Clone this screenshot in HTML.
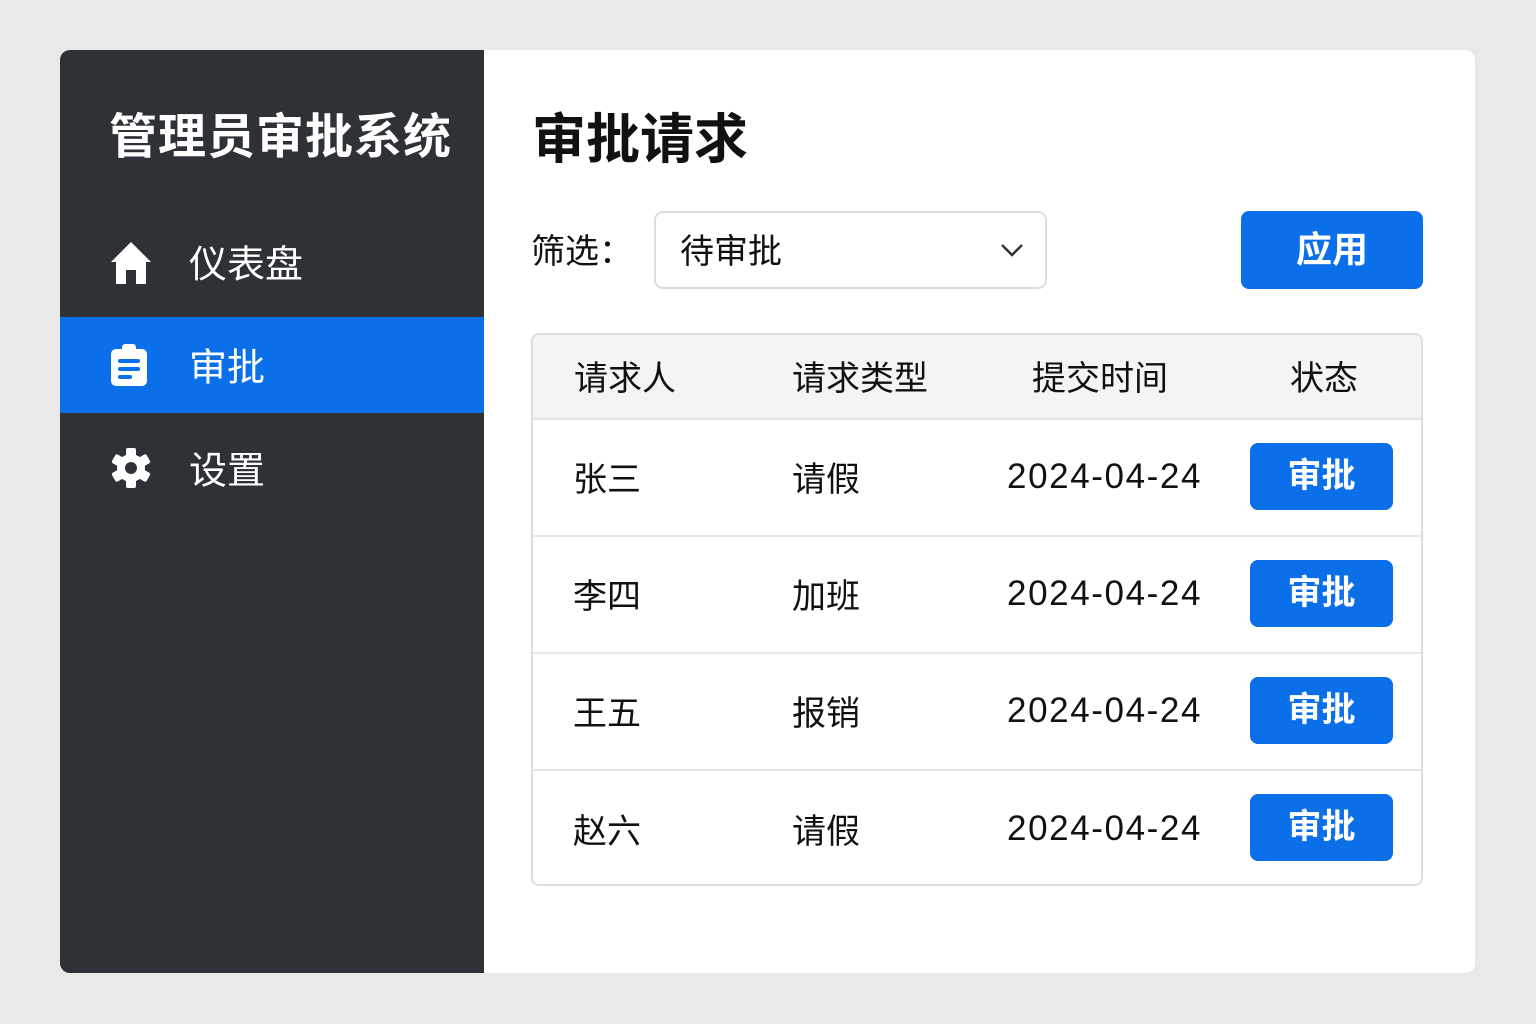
<!DOCTYPE html>
<html><head><meta charset="utf-8"><style>
*{margin:0;padding:0;box-sizing:border-box}
body{width:1536px;height:1024px;background:#e9e9e9;font-family:"Liberation Sans","Noto Sans CJK SC",sans-serif;position:relative;overflow:hidden;color:#111}
.card{position:absolute;left:60px;top:50px;width:1415px;height:923px;background:#fff;border-radius:10px;overflow:hidden}
.side{position:absolute;left:0;top:0;width:424px;height:923px;background:#2e3236}
.abs{position:absolute;white-space:nowrap}
.st{left:49px;top:47px;font-size:48px;font-weight:bold;color:#fff;letter-spacing:1px}
.nav{left:0;width:424px;height:96px;color:#fff;font-size:38px}
.nav span{position:absolute;left:129px;top:50%;transform:translateY(-52%)}
.nav svg{position:absolute;left:50px;top:50%;transform:translateY(-50%)}
.act{background:#0a6fe8}
.h1{left:472px;top:45px;font-size:54px;font-weight:bold}
.btn{background:#0a6fe8;color:#fff;border-radius:8px;text-align:center}
.sel{left:594px;top:161px;width:393px;height:78px;border:2px solid #ddd;border-radius:9px;font-size:34px}
.tbl{left:471px;top:283px;width:892px;height:553px;border:2px solid #ddd;border-radius:8px;overflow:hidden}
.hd{position:absolute;left:0;top:0;width:100%;height:85px;background:#f4f4f4;border-bottom:2px solid #e2e2e2}
.row{position:absolute;left:0;width:100%;height:117px;border-bottom:2px solid #e6e6e6;font-size:34px}
.c{position:absolute;top:50%;transform:translateY(-53%)}
.d{letter-spacing:1.6px;font-size:35px}
.rb{position:absolute;left:717px;top:23px;width:143px;height:67px;line-height:67px;font-size:34px;font-weight:bold}
</style></head><body>
<div class="card">
<div class="side">
<div class="abs st">管理员审批系统</div>
<div class="abs nav" style="top:164px"><svg width="42" height="44" viewBox="0 0 42 44"><path d="M21 2 L1 22 H6 V44 H16 V30 H26 V44 H36 V22 H41 Z" fill="#fff"/></svg><span>仪表盘</span></div>
<div class="abs nav act" style="top:267px"><svg width="38" height="42" viewBox="0 0 38 42"><rect x="1" y="5" width="36" height="37" rx="5" fill="#fff"/><rect x="12" y="0" width="14" height="9" rx="3" fill="#fff"/><rect x="8" y="15" width="22" height="4" rx="2" fill="#0a6fe8"/><rect x="8" y="23" width="22" height="4" rx="2" fill="#0a6fe8"/><rect x="8" y="31" width="14" height="4" rx="2" fill="#0a6fe8"/></svg><span>审批</span></div>
<div class="abs nav" style="top:370px"><svg width="42" height="42" viewBox="0 0 42 42"><g fill="#fff"><circle cx="21" cy="21" r="14"/><g id="t"><rect x="16" y="1" width="10" height="10" rx="2"/><rect x="16" y="31" width="10" height="10" rx="2"/></g><use href="#t" transform="rotate(60 21 21)"/><use href="#t" transform="rotate(120 21 21)"/></g><circle cx="21" cy="21" r="6" fill="#2e3236"/></svg><span>设置</span></div>
</div>
<div class="abs h1">审批请求</div>
<div class="abs" style="left:471px;top:174px;font-size:34px">筛选：</div>
<div class="abs sel"><span class="c" style="left:24px">待审批</span><svg class="abs" style="left:344px;top:30px" width="24" height="14" viewBox="0 0 24 14"><path d="M2 2 L12 12 L22 2" stroke="#333" stroke-width="2.5" fill="none"/></svg></div>
<div class="abs btn" style="left:1181px;top:161px;width:182px;height:78px;line-height:78px;font-size:36px;font-weight:bold">应用</div>
<div class="abs tbl">
<div class="hd" style="font-size:34px"><span class="c" style="left:41px">请求人</span><span class="c" style="left:259px">请求类型</span><span class="c" style="left:499px">提交时间</span><span class="c" style="left:757px">状态</span></div>
<div class="row" style="top:85px"><span class="c" style="left:40px">张三</span><span class="c" style="left:259px">请假</span><span class="c d" style="left:474px">2024-04-24</span><div class="btn rb">审批</div></div>
<div class="row" style="top:202px"><span class="c" style="left:40px">李四</span><span class="c" style="left:259px">加班</span><span class="c d" style="left:474px">2024-04-24</span><div class="btn rb">审批</div></div>
<div class="row" style="top:319px"><span class="c" style="left:40px">王五</span><span class="c" style="left:259px">报销</span><span class="c d" style="left:474px">2024-04-24</span><div class="btn rb">审批</div></div>
<div class="row" style="top:436px;border-bottom:none"><span class="c" style="left:40px">赵六</span><span class="c" style="left:259px">请假</span><span class="c d" style="left:474px">2024-04-24</span><div class="btn rb">审批</div></div>
</div>
</div>
</body></html>
